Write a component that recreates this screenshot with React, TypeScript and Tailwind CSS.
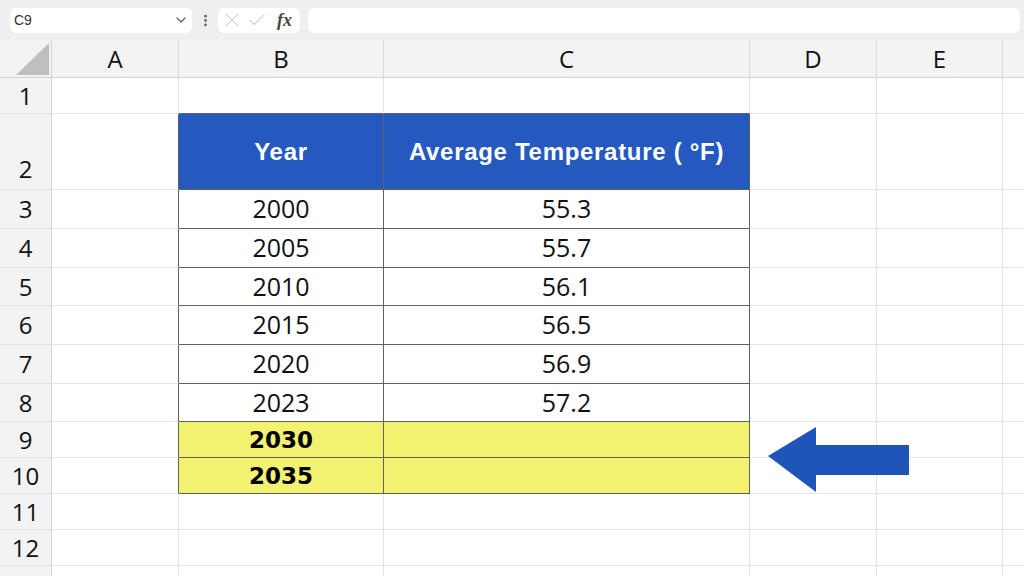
import React from 'react';
import { ChevronDown, EllipsisVertical, X, Check } from 'lucide-react';

type Kind = 'plain' | 'top' | 'head' | 'data' | 'yellow';

interface SheetRow {
  n: number;
  h: string;
  kind: Kind;
  b?: string;
  c?: string;
}

const rows: SheetRow[] = [
  { n: 1, h: 'h-[36px]', kind: 'top' },
  { n: 2, h: 'h-[76px]', kind: 'head', b: 'Year', c: 'Average Temperature ( °F)' },
  { n: 3, h: 'h-[39px]', kind: 'data', b: '2000', c: '55.3' },
  { n: 4, h: 'h-[39px]', kind: 'data', b: '2005', c: '55.7' },
  { n: 5, h: 'h-[38px]', kind: 'data', b: '2010', c: '56.1' },
  { n: 6, h: 'h-[39px]', kind: 'data', b: '2015', c: '56.5' },
  { n: 7, h: 'h-[39px]', kind: 'data', b: '2020', c: '56.9' },
  { n: 8, h: 'h-[38px]', kind: 'data', b: '2023', c: '57.2' },
  { n: 9, h: 'h-[36px]', kind: 'yellow', b: '2030' },
  { n: 10, h: 'h-[36px]', kind: 'yellow', b: '2035' },
  { n: 11, h: 'h-[36px]', kind: 'plain' },
  { n: 12, h: 'h-[36px]', kind: 'plain' },
  { n: 13, h: 'h-[36px]', kind: 'plain' },
];

const uiFont = { fontFamily: '"Open Sans", "Noto Sans", sans-serif' };

function TableCell({ kind, text, width }: { kind: Kind; text?: string; width: string }) {
  const inTable = kind === 'head' || kind === 'data' || kind === 'yellow';
  const border = inTable
    ? 'border-r border-b border-r-[#606060] border-b-[#606060]'
    : kind === 'top'
    ? 'border-r border-b border-r-[#e3e3e3] border-b-[#606060]'
    : 'border-r border-b border-[#e3e3e3]';
  const bg = kind === 'head' ? 'bg-[#2559bf]' : kind === 'yellow' ? 'bg-[#f3f170]' : 'bg-white';

  let content = null;
  if (text && kind === 'head') {
    content = (
      <span className="text-white font-bold text-[24px] tracking-[0.7px]" style={{ fontFamily: '"Liberation Sans", Arial, sans-serif' }}>
        {text}
      </span>
    );
  } else if (text && kind === 'yellow') {
    content = (
      <span className="text-black font-bold text-[23px] pt-[2px]" style={{ fontFamily: '"DejaVu Sans", Verdana, sans-serif' }}>
        {text}
      </span>
    );
  } else if (text) {
    content = (
      <span className="text-[#111] text-[25px]" style={uiFont}>
        {text}
      </span>
    );
  }

  return (
    <div className={`${width} h-full flex items-center justify-center ${border} ${bg}`}>
      {content}
    </div>
  );
}

function FormulaBar() {
  return (
    <div className="h-[40px] bg-[#efefef] flex items-center">
      <div className="ml-[10px] w-[182px] h-[25px] bg-white rounded-md flex items-center justify-between pl-[4px] pr-[3px]">
        <span className="text-[14px] text-[#333]" style={{ fontFamily: '"Liberation Sans", Arial, sans-serif' }}>
          C9
        </span>
        <ChevronDown size={16} strokeWidth={1.6} className="text-[#555]" />
      </div>
      <div className="w-[26px] flex justify-center">
        <EllipsisVertical size={15} strokeWidth={2.6} className="text-[#666]" />
      </div>
      <div className="w-[82px] h-[25px] bg-white rounded-md flex items-center pl-[3px] gap-[3px]">
        <X size={22} strokeWidth={1.1} className="text-[#c8c8c8]" />
        <Check size={22} strokeWidth={1.1} className="text-[#c8c8c8]" />
        <span className="text-[18px] italic font-bold text-[#444] ml-[6px]" style={{ fontFamily: '"Liberation Serif", "Times New Roman", serif' }}>
          fx
        </span>
      </div>
      <div className="ml-[8px] flex-1 mr-[4px] h-[25px] bg-white rounded-md" />
    </div>
  );
}

function ColumnHeaders() {
  const cols = [
    { label: 'A', w: 'w-[127px]' },
    { label: 'B', w: 'w-[205px]' },
    { label: 'C', w: 'w-[366px]' },
    { label: 'D', w: 'w-[127px]' },
    { label: 'E', w: 'w-[126px]' },
  ];
  return (
    <div className="h-[38px] flex bg-[#f3f3f3] border-b border-[#d4d4d4]">
      <div className="w-[52px] h-full flex items-end justify-end pr-[2px] pb-[2px] border-r border-[#d4d4d4]">
        <svg width="33" height="32" viewBox="0 0 33 32">
          <polygon points="0,32 33,0 33,32" fill="#bfbfbf" />
        </svg>
      </div>
      {cols.map(col => (
        <div
          key={col.label}
          className={`${col.w} h-full flex items-center justify-center border-r border-[#dadada] text-[24px] text-[#111]`}
          style={uiFont}
        >
          {col.label}
        </div>
      ))}
      <div className="flex-1" />
    </div>
  );
}

export default function App() {
  return (
    <div className="relative w-[1024px] h-[576px] overflow-hidden bg-white">
      <FormulaBar />
      <ColumnHeaders />

      {rows.map(row => {
        const inTable = row.kind === 'head' || row.kind === 'data' || row.kind === 'yellow';
        return (
          <div key={row.n} className={`${row.h} flex`}>
            {/* row number */}
            <div
              className={`w-[52px] h-full flex justify-center bg-[#f3f3f3] border-r border-b border-r-[#d4d4d4] border-b-[#e3e3e3] text-[24px] text-[#111] ${
                row.kind === 'head' ? 'items-end pb-[2px]' : 'items-center'
              }`}
              style={uiFont}
            >
              {row.n}
            </div>
            <div
              className={`w-[127px] h-full border-r border-b border-b-[#e3e3e3] ${
                inTable ? 'border-r-[#606060]' : 'border-r-[#e3e3e3]'
              }`}
            />
            <TableCell kind={row.kind} text={row.b} width="w-[205px]" />
            <TableCell kind={row.kind} text={row.c} width="w-[366px]" />
            <div className="w-[127px] h-full border-r border-b border-[#e3e3e3]" />
            <div className="w-[126px] h-full border-r border-b border-[#e3e3e3]" />
            <div className="flex-1 h-full border-b border-[#e3e3e3]" />
          </div>
        );
      })}

      {/* pointer arrow */}
      <svg className="absolute left-[766px] top-[425px]" width="145" height="70" viewBox="0 0 145 70">
        <polygon points="2,31 50,2 50,20 143,20 143,50 50,50 50,67" fill="#1f55b9" />
      </svg>
    </div>
  );
}
